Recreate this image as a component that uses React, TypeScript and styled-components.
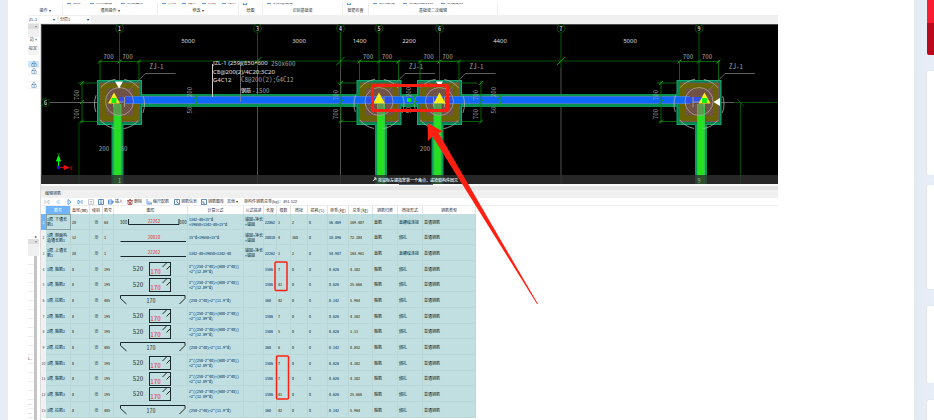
import React from "react";
import styled, { createGlobalStyle } from "styled-components";
import { LockKeyhole } from "lucide-react";

const GlobalStyle = createGlobalStyle`
  * { box-sizing: border-box; }
  body { margin: 0; background: #e7edf5; }
  button, select { font: inherit; color: inherit; margin: 0; padding: 0; border: 0; background: none; }
`;

const cjk = `"Liberation Sans", "Noto Sans CJK SC", sans-serif`;
const mono = `"Noto Sans Mono CJK SC", "Noto Sans CJK SC", monospace`;

const Page = styled.div`
  display: flex;
  height: 100vh;
  overflow: hidden;
  padding-left: 8px;
  font-family: ${cjk};
  font-size: 4px;
  line-height: 5px;
  color: #333;
`;

const Article = styled.main`
  flex: 1;
  min-width: 0;
  padding: 3px 20px 0;
  background: #fff;
`;

const Sidebar = styled.aside`
  flex: none;
  width: 20px;
  padding-left: 13px;
  overflow: hidden;
  background: linear-gradient(90deg, #e4eaf2, #e9eff8);
`;

const BannerTop = styled.div`
  height: 23px;
  background: #ff1c33;
`;

const BannerBottom = styled.div`
  height: 32px;
  margin-bottom: 16px;
  background: #bb081d;
  border-bottom-left-radius: 2px;
`;

const Card = styled.div<{ $h: number; $gap: number }>`
  height: ${(p) => p.$h}px;
  margin-bottom: ${(p) => p.$gap}px;
  background: #fff;
  border-radius: 2px 0 0 2px;
  box-shadow: 0 0 2px #d5dae2;
`;

const Figure = styled.div`
  position: relative;
  width: 100%;
  max-width: 750px;
`;

const Ribbon = styled.div`
  display: flex;
  height: 12px;
`;

const RibbonGroup = styled.div<{ $w: number }>`
  display: flex;
  flex-direction: column;
  justify-content: space-between;
  width: ${(p) => p.$w}px;
  border-right: 1px solid #eee;
  white-space: nowrap;
`;

const CutRow = styled.div<{ $gap: number }>`
  display: flex;
  align-items: flex-end;
  gap: ${(p) => p.$gap}px;
  height: 2px;
  padding-left: 4px;
  overflow: hidden;
`;

const CutItem = styled.button`
  display: flex;
  flex: none;
  gap: 2px;
  line-height: 5px;
`;

const CutIcon = styled.span`
  width: 4px;
  height: 4px;
  border: 1px solid #5b9be0;
`;

const GroupLabel = styled.div`
  height: 7px;
  text-align: center;
`;

const ComboBar = styled.div`
  display: flex;
  align-items: center;
  gap: 2px;
  height: 9px;
  background: #f0f0f0;
`;

const ComboBox = styled.label<{ $w: number }>`
  display: flex;
  align-items: center;
  justify-content: space-between;
  width: ${(p) => p.$w}px;
  height: 7px;
  padding: 0 2px 0 1px;
  background: #fff;
`;

const Combo = styled.select`
  appearance: none;
  width: 20px;
  line-height: 5px;
  outline: 0;
`;

const Body = styled.div`
  display: flex;
`;

const SidePanel = styled.div`
  flex: none;
  width: 13px;
  padding-right: 1px;
  background: #fff;
  border-right: 1px solid #ddd;
`;

const PanelBar = styled.div<{ $h: number; $shade?: string }>`
  height: ${(p) => p.$h}px;
  padding-right: 2px;
  line-height: 5px;
  text-align: right;
  white-space: nowrap;
  background: ${(p) => p.$shade || "#fff"};
`;

const PanelRow = styled.div<{ $on?: boolean }>`
  display: flex;
  justify-content: center;
  align-items: center;
  height: 7px;
  border-bottom: 1px solid #f0f0f0;
  background: ${(p) => (p.$on ? "#cfe7fb" : "#fff")};
`;

const LockButton = styled.button`
  display: flex;
  color: #3f78ad;
`;

const PropertyList = styled.div`
  height: 177px;
  margin-right: 2px;
  border-right: 3px solid #c4c4c4;
`;

const PropertyRow = styled.div`
  height: 9px;
  line-height: 8px;
  border-bottom: 1px solid #eee;
`;

const Workspace = styled.div`
  flex: 1;
  min-width: 0;
`;

const Viewport = styled.div`
  height: 160px;
  background: #000;
  svg { display: block; }
`;

const Splitter = styled.div`
  height: 6px;
  border-top: 2px solid #fafafa;
  background: #e5e5e5;
`;

const PaneTitle = styled.div`
  height: 8px;
  padding-left: 4px;
  line-height: 7px;
  background: #f0f0f0;
`;

const Toolbar = styled.div`
  display: flex;
  align-items: center;
  gap: 5px;
  height: 8px;
  padding-left: 3px;
  white-space: nowrap;
  border-bottom: 1px solid #eee;
`;

const ToolButton = styled.button<{ $w: number }>`
  display: flex;
  align-items: center;
  gap: 1px;
  flex: none;
  width: ${(p) => p.$w}px;
  svg { flex: none; }
`;

const Table = styled.table`
  table-layout: fixed;
  border-collapse: separate;
  border-spacing: 0;
  width: 435px;
  color: #0b1a1c;
  font-family: ${mono};
  font-weight: 500;
`;

const HeadRow = styled.tr`
  height: 8px;
  background: #fff;
`;

const HeadCell = styled.th<{ $on?: boolean }>`
  padding: 0;
  font-weight: 400;
  white-space: nowrap;
  color: ${(p) => (p.$on ? "#fff" : "#333")};
  background: ${(p) => (p.$on ? "#70b5fa" : "#fff")};
  border-right: 1px solid #e4e4e4;
`;

const Row = styled.tr`
  height: 16px;
  background: #c1dfe1;
  &:nth-child(3n + 2) { height: 15px; }
`;

const IndexCell = styled.th<{ $on?: boolean }>`
  padding: 0;
  font-weight: 400;
  color: ${(p) => (p.$on ? "#fff" : "#555")};
  background: ${(p) => (p.$on ? "#70b5fa" : "#f0f0f0")};
`;

const Cell = styled.td<{ $on?: boolean; $center?: boolean }>`
  padding: 0 1px;
  line-height: 5px;
  overflow: hidden;
  text-align: ${(p) => (p.$center ? "center" : "left")};
  box-shadow: inset -1px -1px 0 ${(p) => (p.$on ? "#7b9294" : "#bad7d8")};
  outline: ${(p) => (p.$on ? "1px solid #8aa3a5" : "0")};
  outline-offset: -1px;
  svg { display: block; margin: 0 auto; }
`;

const NumCell = styled(Cell)`
  white-space: nowrap;
`;

const FormulaCell = styled(Cell)`
  white-space: pre;
`;

const Annotations = styled.svg`
  position: absolute;
  inset: 0;
  pointer-events: none;
`;

type TextProps = { x: number; y: number; children: React.ReactNode; size?: number; fill?: string; turn?: boolean };

function CadText({ x, y, children, size = 7, fill = "#9a9a9a", turn }: TextProps) {
  return (
    <text
      x={x}
      y={y}
      fill={fill}
      fontSize={size}
      fontFamily={mono}
      textAnchor="middle"
      dominantBaseline="central"
      transform={turn ? `rotate(-90 ${x} ${y})` : undefined}
    >
      {children}
    </text>
  );
}

function Tick({ x, y, r = 2 }: { x: number; y: number; r?: number }) {
  return <path d={`M${x - r} ${y + r}L${x + r} ${y - r}`} stroke="#0b9a0b" strokeWidth={1} />;
}

function FootingBase({ cx }: { cx: number }) {
  return (
    <g>
      <rect x={cx - 22} y={80.5} width={44} height={44} fill="#008552" stroke="#16a86e" />
      <rect x={cx - 19.5} y={83} width={39} height={38.5} fill="#6a6400" stroke="#8a4a5c" strokeWidth={0.8} />
      <rect x={cx - 13} y={88.5} width={27} height={27} fill="#6b4d40" />
      <rect x={cx - 13} y={88.5} width={27} height={27} fill="url(#hatch)" />
    </g>
  );
}

function FootingMarks({ cx, tri, green, side }: { cx: number; tri: number; green?: boolean; side: number }) {
  const edge = side < 0 ? cx - 22 : cx + 22;
  return (
    <g fill="none">
      <circle cx={cx} cy={101.5} r={14} stroke="#aaa39b" strokeWidth={0.8} />
      <circle cx={cx} cy={104} r={25} stroke="#a9b5ad" strokeWidth={0.8} strokeDasharray="17 9" strokeDashoffset={8} />
      <path d={`M${cx - 6} 97v10M${cx - 6} 102h10M${cx + 5} 97v10`} stroke="#a49c84" />
      <path d={`M${tri} 92.5l6 11h-12z`} fill="#f7ee16" />
      {green && <rect x={tri - 2.5} y={98} width={5} height={5} fill="#12ef12" />}
      <path d={`M${cx + 9} 91L${cx + 26} 73.5H${cx + 56}`} stroke="#777" strokeWidth={0.8} />
      <CadText x={cx + 37} y={66}>ZJ-1</CadText>
      <path d={`M${cx - 19.5} 80V60.5M${cx + 19.5} 80V60.5M${cx - 21} 61.5h42`} stroke="#087d08" strokeWidth={0.8} />
      <Tick x={cx - 19.5} y={61.5} />
      <Tick x={cx} y={61.5} />
      <Tick x={cx + 19.5} y={61.5} />
      <CadText x={cx - 11} y={56}>700</CadText>
      <CadText x={cx + 8} y={56}>700</CadText>
      <path d={`M${cx + side} 81v42M${cx + side - 4} 83H${edge}M${cx + side - 2} 121.5H${edge}`} stroke="#087d08" strokeWidth={0.8} />
      <Tick x={cx + side} y={83} />
      <Tick x={cx + side} y={102} />
      <Tick x={cx + side} y={121.5} />
      <CadText turn x={cx + side - 6} y={95}>700</CadText>
      <CadText turn x={cx + side - 6} y={114}>700</CadText>
    </g>
  );
}

const axes: [number, string][] = [[119.5, "1"], [257.5, "3"], [340.5, "4"], [379, "5"], [439.5, "6"], [561, "7"], [699, "9"]];
const spans: [number, string][] = [[188, "5000"], [299, "3000"], [359.5, "1400"], [409, "2200"], [500, "4400"], [630, "5000"]];
const columns = [117.5, 381, 437.5, 701];

function Drawing() {
  return (
    <svg width="100%" height="160" viewBox="41 24 737 160" preserveAspectRatio="xMinYMin slice" role="img" aria-label="基础平面图">
      <defs>
        <pattern id="hatch" width="3" height="3" patternUnits="userSpaceOnUse">
          <path d="M0 3L3 0M0 0L3 3" stroke="#7c5b54" strokeWidth="0.6" />
        </pattern>
      </defs>
      <rect x="41" y="24" width="737" height="1" fill="#4a4a4a" />
      <path d="M41.5 24V184" stroke="#444" />
      <path d="M50 102.5H97M720 102.5h14" stroke="#777" strokeWidth={0.8} />
      <path d="M139 61H678" stroke="#035203" />
      <path d="M79 122V184M734 102.5H778M740.5 102V184" stroke="#045c04" strokeWidth={0.8} />
      <path d="M737 99l7 7" stroke="#045c04" />
      {axes.map(([x, n]) => (
        <g key={n}>
          <path d={`M${x} 24V${[257.5, 340.5, 561].includes(x) ? 68 : 80}`} stroke="#087508" strokeWidth={0.8} />
          {[257.5, 340.5, 561].includes(x) && <path d={`M${x} 68V184`} stroke="#666" strokeWidth={0.8} />}
          {[257.5, 340.5, 561].includes(x) && <Tick x={x} y={61} r={4} />}
          <circle cx={x} cy={28.5} r={4} fill="#000" stroke="#065c06" strokeWidth={0.8} />
          <CadText x={x} y={28.5} size={6} fill="#f4f4f4">{n}</CadText>
        </g>
      ))}
      {spans.map(([x, n]) => (
        <text key={x} x={x} y={43} fill="#dcdcdc" fontSize={6} fontFamily="Noto Sans" textAnchor="middle">{n}</text>
      ))}
      <circle cx={45.5} cy={102.5} r={4} stroke="#065c06" strokeWidth={0.8} />
      <CadText x={45.5} y={102.5} size={6} fill="#eee">G</CadText>

      <FootingBase cx={119.5} />
      <FootingBase cx={379} />
      <FootingBase cx={439.5} />
      <FootingBase cx={699} />

      {columns.map((x) => (
        <g key={x}>
          <path d={`M${x} 124V184`} stroke="#0a9a58" strokeWidth={12} />
          <path d={`M${x} 104V184`} stroke="#36c04e" strokeWidth={8} />
          <path d={`M${x} 104V184`} stroke="#25e020" strokeWidth={6} />
          <path d={`M${x} 104V115`} stroke="#5d9a50" strokeWidth={6} />
        </g>
      ))}

      <path d="M142 100.5H357M401 100.5H417M462 100.5H677" stroke="#07934f" strokeWidth={13} />
      <path d="M125 100H690" stroke="#4a78c8" strokeWidth={8} />
      <path d="M119 100H700" stroke="#0d68ff" strokeWidth={6} />
      <path d="M119 100h14M366 100h27M426 100h27M686 100h16" stroke="#3150f0" strokeWidth={6} />

      <FootingMarks cx={119.5} tri={114} green side={-37.5} />
      <FootingMarks cx={379} tri={379} side={-38} />
      <FootingMarks cx={439.5} tri={439.5} side={41.5} />
      <FootingMarks cx={699} tri={704.5} green side={-38} />
      <rect x={407} y={98} width={4} height={4} fill="#10e818" />
      <path d="M115 81.5h8l-4 7z" fill="#fff" />
      <path d="M436 81.5h7l-2 3h-3z" fill="#fff" />
      <path d="M713.5 102l6.5-4v8z" fill="#fff" />

      {[196, 415, 500].map((x) => (
        <g key={x}>
          <path d={`M${x} 95v11`} stroke="#0aa00a" />
          <Tick x={x} y={97} />
          <Tick x={x} y={103} />
          <CadText turn x={x - 7} y={92}>200</CadText>
          <CadText turn x={x - 7} y={110}>50</CadText>
        </g>
      ))}
      <CadText x={104} y={148}>200</CadText>
      <CadText x={124} y={148}>50</CadText>
      <CadText x={425} y={148}>200</CadText>
      <CadText x={444} y={148}>50</CadText>

      <path d="M212.5 64V97" stroke="#ccc" />
      <path d="M240.5 62V102" stroke="#888" strokeWidth={0.8} />
      <g fontFamily="Noto Sans" fontSize={6} fill="#e0e0e0">
        <text x={213} y={65}>JZL-1 (259)(850*600</text>
        <text x={213} y={73.5}>C8@200(2)/4C20;3C20</text>
        <text x={213} y={82}>G4C12</text>
      </g>
      <g fontFamily={mono} fontSize={7} fill="#9a9a9a">
        <text x={271} y={65.5}>250x600</text>
        <text x={241} y={82}>C8@200(2);G4C12</text>
        <text x={252} y={92.5}>-1500</text>
      </g>
      <text x={241} y={92} fontSize={5} fontFamily="Noto Sans CJK SC" fill="#fff">钢筋</text>

      <path d="M58.5 166V158M56.5 161l2-5 2 5z" stroke="#0f0" fill="#0f0" />
      <path d="M60 167.5h5M64 165.5l5 2-5 2z" stroke="#f01010" fill="#f01010" strokeWidth={0.8} />
      <rect x={57} y={166} width={3} height={3} fill="#1414dc" />
      <CadText x={58.5} y={154} size={5} fill="#0d0">Y</CadText>
      <CadText x={71} y={167.5} size={5} fill="#e01010">X</CadText>

      <rect x={41} y={175} width={737} height={9} fill="#303030" fillOpacity={0.82} />
      {[119.5, 699].map((x) => <CadText key={x} x={x} y={180} size={6} fill="#a0a0a0">{x < 200 ? "1" : "9"}</CadText>)}
      <path d="M373 181l3-3M374 178h2v2" stroke="#ddd" fill="none" />
      <text x={378} y={181.5} fontSize={4} fontWeight={500} fill="#fff" fontFamily="Noto Sans CJK SC">按鼠标左键指定第一个角点，或拾取构件图元</text>
    </svg>
  );
}

function Shape({ kind, value }: { kind: string; value: string }) {
  const red = { fill: "#e23c3c", fontFamily: mono, textAnchor: "middle" as const };
  const dark = { fill: "#2c4446", fontFamily: mono, textAnchor: "middle" as const };
  const line = { stroke: "#17292b", strokeWidth: 1, fill: "none" };
  return (
    <svg width={72} height={14} viewBox="0 0 72 14">
      {kind === "u" && (
        <>
          <path d="M13.5 4v5.5H64V4" {...line} />
          <text x={8.5} y={9} fontSize={5} {...dark}>300</text>
          <text x={68} y={9} fontSize={5} {...dark}>300</text>
          <text x={39} y={8} fontSize={5} {...red}>{value}</text>
        </>
      )}
      {kind === "line" && (
        <>
          <path d="M5.5 10.5H71" {...line} />
          <text x={39} y={8} fontSize={5} {...red}>{value}</text>
        </>
      )}
      {kind === "stirrup" && (
        <>
          <text x={23} y={9} fontSize={7} {...dark}>520</text>
          <rect x={34.5} y={0.5} width={21} height={13} {...line} />
          <path d="M47.500 5l4-4M51.500 7.500l4-4" {...line} />
          <text x={40.5} y={11.5} fontSize={7} {...red}>170</text>
        </>
      )}
      {kind === "hook" && (
        <>
          <path d="M11.5 11L5.5 5.500V2.5H70V5.500L64.5 11" {...line} />
          <text x={36} y={10} fontSize={6} {...dark}>170</text>
        </>
      )}
    </svg>
  );
}

type Bar = { name: string; d: string; no: string; kind: string; v: string; f: string; desc: string; len: string; n: string; lap: string; w: string; total: string; cls: string; join: string };

const stirrup = (name: string, n: string, total: string): Bar => ({
  name, d: "8", no: "195", kind: "stirrup", v: "170", f: "2*((250-2*40)+(600-2*40))\n+2*(12.89*d)", desc: "", len: "1586", n, lap: "0", w: "0.626", total, cls: "箍筋", join: "绑扎",
});
const tie = (name: string, n: string, total: string): Bar => ({
  name, d: "8", no: "485", kind: "hook", v: "170", f: "(250-2*40)+2*(11.9*d)", desc: "", len: "360", n, lap: "0", w: "0.142", total, cls: "箍筋", join: "绑扎",
});

const bars: Bar[] = [
  { name: "1跨.下通长筋1", d: "20", no: "64", kind: "u", v: "22262", f: "1342-40+15*d\n+19650+1342-40+15*d", desc: "锚固+净长\n+锚固", len: "22862", n: "3", lap: "2", w: "56.469", total: "169.407", cls: "直筋", join: "直螺纹连接" },
  { name: "1跨.侧面构造通长筋1", d: "12", no: "1", kind: "line", v: "20010", f: "15*d+19650+15*d", desc: "锚固+净长\n+锚固", len: "20010", n: "4", lap: "360", w: "18.096", total: "72.384", cls: "直筋", join: "绑扎" },
  { name: "1跨.上通长筋1", d: "20", no: "1", kind: "line", v: "22262", f: "1342-40+19650+1342-40", desc: "锚固+净长\n+锚固", len: "22262", n: "3", lap: "2", w: "54.987", total: "164.961", cls: "直筋", join: "直螺纹连接" },
  stirrup("1跨.箍筋1", "7", "4.382"),
  stirrup("1跨.箍筋2", "41", "25.666"),
  tie("1跨.拉筋1", "42", "5.964"),
  stirrup("2跨.箍筋1", "7", "4.382"),
  stirrup("2跨.箍筋2", "5", "3.13"),
  tie("2跨.拉筋1", "6", "0.852"),
  stirrup("3跨.箍筋1", "7", "4.382"),
  stirrup("3跨.箍筋2", "7", "4.382"),
  stirrup("3跨.箍筋3", "41", "25.666"),
  tie("3跨.拉筋1", "42", "5.964"),
];

const widths = [5, 25, 19, 13, 11, 74, 56, 20, 13, 14, 17, 20, 21, 24, 25, 25, 53];
const heads = ["", "筋号", "直径(mm)", "级别", "筋号", "图形", "计算公式", "公式描述", "长度", "根数", "搭接", "损耗(%)", "单重(kg)", "总重(kg)", "钢筋归类", "搭接形式", "钢筋类型"];

const groups: { w: number; label: string; gap: number; items: string[] }[] = [
  { w: 35, label: "操作 ▾", gap: 0, items: [] },
  { w: 95, label: "通用操作 ▾", gap: 9, items: ["锁定", "两点辅轴", "转换图元"] },
  { w: 81, label: "修改 ▾", gap: 6, items: ["移动", "延伸", "打断", "拉伸"] },
  { w: 24, label: "绘图", gap: 0, items: [""] },
  { w: 80, label: "识别基础梁", gap: 0, items: ["识别基础梁"] },
  { w: 26, label: "智能布置", gap: 0, items: [""] },
  { w: 129, label: "基础梁二次编辑", gap: 8, items: ["应用到梁", "生成侧面钢筋", "生成梁筋"] },
];

const glyphs: Record<string, string> = {
  first: "M1 1v4M5 1L2.5 3 5 5z",
  prev: "M4 1L1.5 3 4 5z",
  next: "M2 .5L5 3 2 5.5z",
  last: "M1 1l2.5 2L1 5zM5 1v4",
  up: "M.5.5h5v5h-5zM3 5V2M2 3l1-1 1 1",
  down: "M.5.5h5v5h-5zM3 1v3.5M2 3.5l1 1 1-1",
  insert: "M.5 1h3.5v4H.5zM.5 3h5M4 2l1.5 1L4 4",
  remove: "M1 2h4v3.5H1zM0 1.5h6M2 .5h2M2 3l2 2M4 3L2 5",
  scale: "M1 0v5h5M3 5V2M5 5V3",
  info: "M.5.5h5v5h-5zM2 2h2M3 3l2 2",
  library: "M.5.5h5v5h-5zM2 2v2h2",
};

const tools: { icon: string; w: number; label?: string; name: string; c: string }[] = [
  { icon: "first", w: 6, name: "首条", c: "#b9bfc8" },
  { icon: "prev", w: 6, name: "上一条", c: "#a8c8ee" },
  { icon: "next", w: 6, name: "下一条", c: "#3d8bea" },
  { icon: "last", w: 6, name: "末条", c: "#3d8bea" },
  { icon: "up", w: 5, name: "上移", c: "#b9bfc8" },
  { icon: "down", w: 5, name: "下移", c: "#3870ad" },
  { icon: "insert", w: 14, label: "插入", name: "插入", c: "#3d7fd0" },
  { icon: "remove", w: 14, label: "删除", name: "删除", c: "#a34a4a" },
  { icon: "scale", w: 23, label: "缩尺配筋", name: "缩尺配筋", c: "#4d86c6" },
  { icon: "info", w: 22, label: "钢筋信息", name: "钢筋信息", c: "#3870ad" },
  { icon: "library", w: 21, label: "钢筋图库", name: "钢筋图库", c: "#3870ad" },
];

export default function App() {
  return (
    <>
      <GlobalStyle />
      <Page>
        <Article>
          <Figure>
            <Ribbon>
              {groups.map((g) => (
                <RibbonGroup key={g.label} $w={g.w}>
                  <CutRow $gap={g.gap}>
                    {g.items.map((t) => (
                      <CutItem key={t} aria-label={t || g.label}><CutIcon />{t}</CutItem>
                    ))}
                  </CutRow>
                  <GroupLabel>{g.label}</GroupLabel>
                </RibbonGroup>
              ))}
            </Ribbon>
            <ComboBar>
              <ComboBox $w={29}>
                <Combo aria-label="构件"><option>ZL-1</option></Combo>▾
              </ComboBox>
              <ComboBox $w={32}>
                <Combo aria-label="分层"><option>分层1</option></Combo>▾
              </ComboBox>
            </ComboBar>
            <Body>
              <SidePanel>
                <PanelBar $h={5} $shade="#dedede">×</PanelBar>
                <PanelBar $h={8} $shade="#f0f0f0" />
                <PanelBar $h={9}>边 »</PanelBar>
                <PanelBar $h={9} $shade="#f3f3f3">标定</PanelBar>
                <PanelBar $h={6} />
                {[true, true, false, true].map((lock, i) => (
                  <PanelRow key={i} $on={i === 0}>
                    {lock && <LockButton aria-label="锁定"><LockKeyhole size={6} /></LockButton>}
                  </PanelRow>
                ))}
                <PanelBar $h={145} />
                <PanelBar $h={5}>▸</PanelBar>
                <PanelBar $h={5} $shade="#dedede">×</PanelBar>
                <PanelBar $h={12} $shade="#f0f0f0" />
                <PropertyList>
                  {["", "", "", "", "", "", "", "", "", "", "", "L..", "", "", "", "", "...", "..."].map((t, i) => (
                    <PropertyRow key={i}>{t}</PropertyRow>
                  ))}
                </PropertyList>
              </SidePanel>
              <Workspace>
                <Viewport><Drawing /></Viewport>
                <Splitter />
                <PaneTitle>编辑钢筋</PaneTitle>
                <Toolbar>
                  {tools.map((t) => (
                    <ToolButton key={t.icon} $w={t.w} aria-label={t.name}>
                      <svg width={6} height={6} viewBox="0 0 6 6" fill="none" stroke={t.c} strokeWidth={0.8}><path d={glyphs[t.icon]} /></svg>
                      {t.label}
                    </ToolButton>
                  ))}
                  <ToolButton $w={12}>其他 ▾</ToolButton>
                  <span>单构件钢筋总重(kg)：491.522</span>
                </Toolbar>
                <Table>
                  <colgroup>{widths.map((w, i) => <col key={i} width={w} />)}</colgroup>
                  <thead>
                    <HeadRow>{heads.map((h, i) => <HeadCell key={i} $on={i === 1}>{h}</HeadCell>)}</HeadRow>
                  </thead>
                  <tbody>
                    {bars.map((b, i) => (
                      <Row key={b.name}>
                        <IndexCell $on={i === 0}>{i + 1}</IndexCell>
                        <Cell $on={i === 0}>{b.name}</Cell>
                        <NumCell>{b.d}</NumCell>
                        <Cell $center>⊕</Cell>
                        <NumCell>{b.no}</NumCell>
                        <Cell><Shape kind={b.kind} value={b.v} /></Cell>
                        <FormulaCell>{b.f}</FormulaCell>
                        <FormulaCell>{b.desc}</FormulaCell>
                        <NumCell>{b.len}</NumCell>
                        <NumCell>{b.n}</NumCell>
                        <NumCell>{b.lap}</NumCell>
                        <NumCell>0</NumCell>
                        <NumCell>{b.w}</NumCell>
                        <NumCell>{b.total}</NumCell>
                        <Cell>{b.cls}</Cell>
                        <Cell>{b.join}</Cell>
                        <Cell>普通钢筋</Cell>
                      </Row>
                    ))}
                  </tbody>
                </Table>
              </Workspace>
            </Body>
            <Annotations width={750} height={417} viewBox="28 3 750 417" aria-hidden="true">
              <path d="M399 184.5h34" stroke="#60687c" strokeWidth={1} />
              <g fill="none" stroke="#ff2013">
                <rect x={372.5} y={85.5} width={75} height={25} rx={1} strokeWidth={3} />
                <rect x={275} y={262} width={12} height={28.5} rx={1} strokeWidth={1.5} />
                <rect x={276.5} y={356} width={12} height={43} rx={1} strokeWidth={1.5} />
              </g>
              <path d="M427.5 123L443 131.5L438.5 133L538 304L537 304L432.5 136.5L428 141Z" fill="#ff2013" />
            </Annotations>
          </Figure>
        </Article>
        <Sidebar>
          <BannerTop />
          <BannerBottom />
          <Card $h={104} $gap={10} />
          <Card $h={104} $gap={17} />
          <Card $h={77} $gap={17} />
          <Card $h={60} $gap={0} />
        </Sidebar>
      </Page>
    </>
  );
}
